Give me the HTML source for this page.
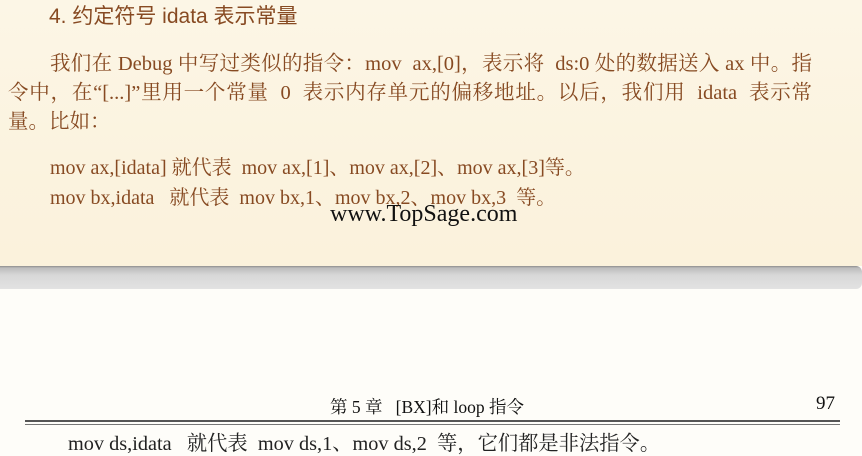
<!DOCTYPE html>
<html><head><meta charset="utf-8"><style>
body{margin:0;width:862px;height:455px;position:relative;overflow:hidden;background:#fefdf9;font-family:"Liberation Serif","Noto Serif CJK SC",serif;}
.top{position:absolute;left:0;top:0;width:862px;height:266px;background:linear-gradient(#fcf6e6,#fbf3df 60%,#fbf2dc);}
.bar{position:absolute;left:0;top:266px;width:862px;height:23px;background:linear-gradient(#8d8d8d 0,#bdbdbd 2px,#d8d8d8 40%,#e2e2e2 100%);border-radius:0 6px 6px 0;}
.t{position:absolute;white-space:nowrap;color:#874a22;}
.h{font-family:"Liberation Sans","Noto Sans CJK SC",sans-serif;font-size:21px;}
.p{font-size:20.5px;text-align:justify;text-align-last:justify;}
.c{font-size:20px;}
.k{color:#111;}
</style></head><body>
<div class="top"></div>
<div class="bar"></div>
<div class="t h" style="left:49px;top:0px;">4. 约定符号 idata 表示常量</div>
<div class="t p" style="left:50px;top:46px;width:762px;">我们在 Debug 中写过类似的指令：mov&nbsp; ax,[0]，表示将&nbsp; ds:0 处的数据送入 ax 中。指</div>
<div class="t p" style="left:8px;top:75px;width:804px;">令中，在“[...]”里用一个常量&nbsp; 0&nbsp; 表示内存单元的偏移地址。以后，我们用&nbsp; idata&nbsp; 表示常</div>
<div class="t" style="left:8px;top:104px;font-size:20.5px;">量。比如：</div>
<div class="t c" style="left:50px;top:151px;">mov ax,[idata] 就代表&nbsp; mov ax,[1]、mov ax,[2]、mov ax,[3]等。</div>
<div class="t c" style="left:50px;top:181px;">mov bx,idata&nbsp;&nbsp; 就代表&nbsp; mov bx,1、mov bx,2、mov bx,3&nbsp; 等。</div>
<div class="t k" style="left:330px;top:201px;font-size:24px;">www.TopSage.com</div>
<div class="t k" style="left:330px;top:394px;font-size:17.5px;">第 5 章&nbsp;&nbsp; [BX]和 loop 指令</div>
<div class="t k" style="left:816px;top:393px;font-size:19px;">97</div>
<div style="position:absolute;left:25px;top:420px;width:815px;height:2px;background:#555;"></div>
<div style="position:absolute;left:25px;top:424px;width:815px;height:1px;background:#777;"></div>
<div class="t k" style="left:68px;top:427px;font-size:20.3px;color:#222;">mov ds,idata&nbsp;&nbsp; 就代表&nbsp; mov ds,1、mov ds,2&nbsp; 等，它们都是非法指令。</div>
</body></html>
